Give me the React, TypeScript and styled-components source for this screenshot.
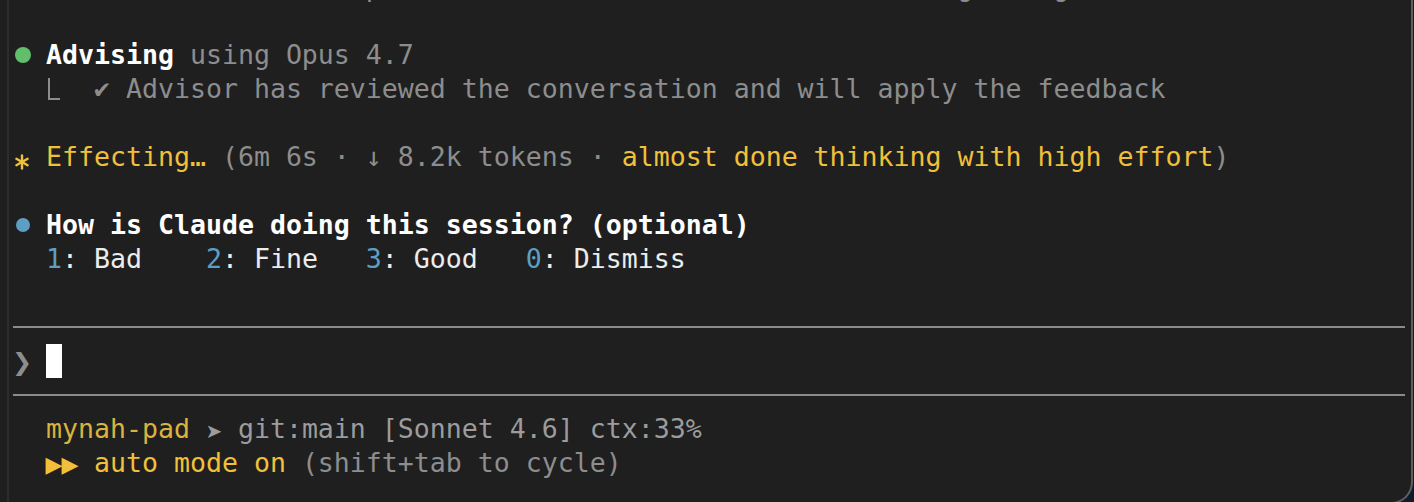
import React from "react";
import styled, { createGlobalStyle } from "styled-components";

const palette = {
  white: "#ffffff",
  text: "#ececec",
  gray: "#8d8d8d",
  soft: "#9c9c9c",
  yellow: "#f1c03b",
  gold: "#dab33e",
  blue: "#5d9fc4",
  green: "#63be6b",
};

type Tone = keyof typeof palette;

const Global = createGlobalStyle`
  html, body { margin: 0; padding: 0; background: #0f1a2b; overflow: hidden; }
  #root { width: 1414px; height: 502px; overflow: hidden; }
`;

const Window = styled.div`
  box-sizing: border-box;
  width: 1413px;
  height: 504px;
  display: flex;
  background: #1f1f1f;
  border-right: 2px solid #5f5f5f;
  border-bottom: 2px solid #5f5f5f;
  border-bottom-right-radius: 22px;
  overflow: hidden;
`;

const Gutter = styled.div`
  width: 7px;
  flex: none;
`;

const PaneRule = styled.div`
  width: 2px;
  flex: none;
  background: #2c2e2c;
`;

const Terminal = styled.div`
  flex: 1;
  min-width: 0;
  display: flex;
  flex-direction: column;
  padding-left: 5px;
  font-family: "DejaVu Sans Mono", "Liberation Mono", monospace;
  font-size: 26.575px;
  line-height: 34px;
  color: ${palette.gray};
  white-space: pre;
`;

const Line = styled.div`
  height: 34px;
  flex: none;
`;

const ClipLine = styled.div`
  height: 4px;
  flex: none;
  overflow: hidden;
  display: flex;
  flex-direction: column;
  justify-content: flex-end;
`;

const Ink = styled.span<{ $tone: Tone; $bold?: boolean }>`
  color: ${(p) => palette[p.$tone]};
  font-weight: ${(p) => (p.$bold ? 700 : 400)};
`;

const Cell = styled.span<{ $tone: Tone; $size: number; $bold?: boolean }>`
  display: inline-flex;
  justify-content: center;
  width: 16px;
  line-height: 1;
  font-family: "DejaVu Sans", "DejaVu Sans Mono", sans-serif;
  font-size: ${(p) => p.$size}px;
  font-weight: ${(p) => (p.$bold ? 700 : 400)};
  color: ${(p) => palette[p.$tone]};
`;

const Elbow = styled.span`
  display: inline-block;
  box-sizing: content-box;
  width: 10px;
  height: 20px;
  margin: 0 2px 0 2px;
  border-left: 2px solid ${palette.gray};
  border-bottom: 2px solid ${palette.gray};
  vertical-align: -2px;
`;

const Dot = styled.span<{ $tone: Tone; $d: number }>`
  display: inline-block;
  width: 16px;
  height: 34px;
  vertical-align: top;
  position: relative;
  &::after {
    content: "";
    position: absolute;
    left: ${(p) => (16 - p.$d) / 2 + 1}px;
    top: ${(p) => 17 - p.$d / 2}px;
    width: ${(p) => p.$d}px;
    height: ${(p) => p.$d}px;
    border-radius: 50%;
    background: ${(p) => palette[p.$tone]};
  }
`;

const Spinner = styled.svg`
  display: inline-block;
  width: 16px;
  height: 16px;
  vertical-align: -4px;
`;

const Cursor = styled.span`
  display: inline-block;
  width: 16px;
  height: 34px;
  background: #ffffff;
  vertical-align: top;
`;

const DividerRow = styled.div`
  height: 34px;
  flex: none;
  display: flex;
  align-items: center;
`;

const Rule = styled.div`
  flex: 1;
  height: 2px;
  margin: 0 6px 0 -1px;
  background: #8a8a8a;
`;

const Asterisk = () => (
  <Spinner viewBox="0 0 16 16">
    <g stroke={palette.yellow} strokeWidth="2.4" strokeLinecap="round">
      <line x1="8" y1="1.5" x2="8" y2="14.5" />
      <line x1="2.4" y1="4.75" x2="13.6" y2="11.25" />
      <line x1="2.4" y1="11.25" x2="13.6" y2="4.75" />
    </g>
  </Spinner>
);

const Blank = () => <Line />;

export default function App() {
  return (
    <>
      <Global />
      <Window>
        <Gutter />
        <PaneRule />
        <Terminal>
          <ClipLine>
            <Line>
              <Ink $tone="gray">{"  Now let me take the plan and work on the other three using a big."}</Ink>
            </Line>
          </ClipLine>
          <Blank />
          <Line>
            <Dot $tone="green" $d={16} />
            {" "}
            <Ink $tone="white" $bold>Advising</Ink>
            <Ink $tone="gray">{" using Opus 4.7"}</Ink>
          </Line>
          <Line>
            {"  "}
            <Elbow />
            {"  "}
            <Cell $tone="gray" $size={23}>✔</Cell>
            <Ink $tone="gray">{" Advisor has reviewed the conversation and will apply the feedback"}</Ink>
          </Line>
          <Blank />
          <Line>
            <Asterisk />
            {" "}
            <Ink $tone="yellow">Effecting…</Ink>
            <Ink $tone="gray">{" (6m 6s · ↓ 8.2k tokens · "}</Ink>
            <Ink $tone="yellow">almost done thinking with high effort</Ink>
            <Ink $tone="gray">)</Ink>
          </Line>
          <Blank />
          <Line>
            <Dot $tone="blue" $d={14} />
            {" "}
            <Ink $tone="white" $bold>How is Claude doing this session? (optional)</Ink>
          </Line>
          <Line>
            {"  "}
            <Ink $tone="blue">1</Ink>
            <Ink $tone="text">{": Bad    "}</Ink>
            <Ink $tone="blue">2</Ink>
            <Ink $tone="text">{": Fine   "}</Ink>
            <Ink $tone="blue">3</Ink>
            <Ink $tone="text">{": Good   "}</Ink>
            <Ink $tone="blue">0</Ink>
            <Ink $tone="text">{": Dismiss"}</Ink>
          </Line>
          <Blank />
          <DividerRow>
            <Rule />
          </DividerRow>
          <Line>
            <Cell $tone="gray" $size={24} $bold>❯</Cell>
            {" "}
            <Cursor />
          </Line>
          <DividerRow>
            <Rule />
          </DividerRow>
          <Line>
            {"  "}
            <Ink $tone="gold">mynah-pad</Ink>
            {" "}
            <Cell $tone="soft" $size={20}>➤</Cell>
            <Ink $tone="soft">{" git:main [Sonnet 4.6] ctx:33%"}</Ink>
          </Line>
          <Line>
            {"  "}
            <Cell $tone="yellow" $size={22}>▶</Cell>
            <Cell $tone="yellow" $size={22}>▶</Cell>
            {" "}
            <Ink $tone="yellow">auto mode on</Ink>
            <Ink $tone="gray">{" (shift+tab to cycle)"}</Ink>
          </Line>
          <Blank />
        </Terminal>
      </Window>
    </>
  );
}
